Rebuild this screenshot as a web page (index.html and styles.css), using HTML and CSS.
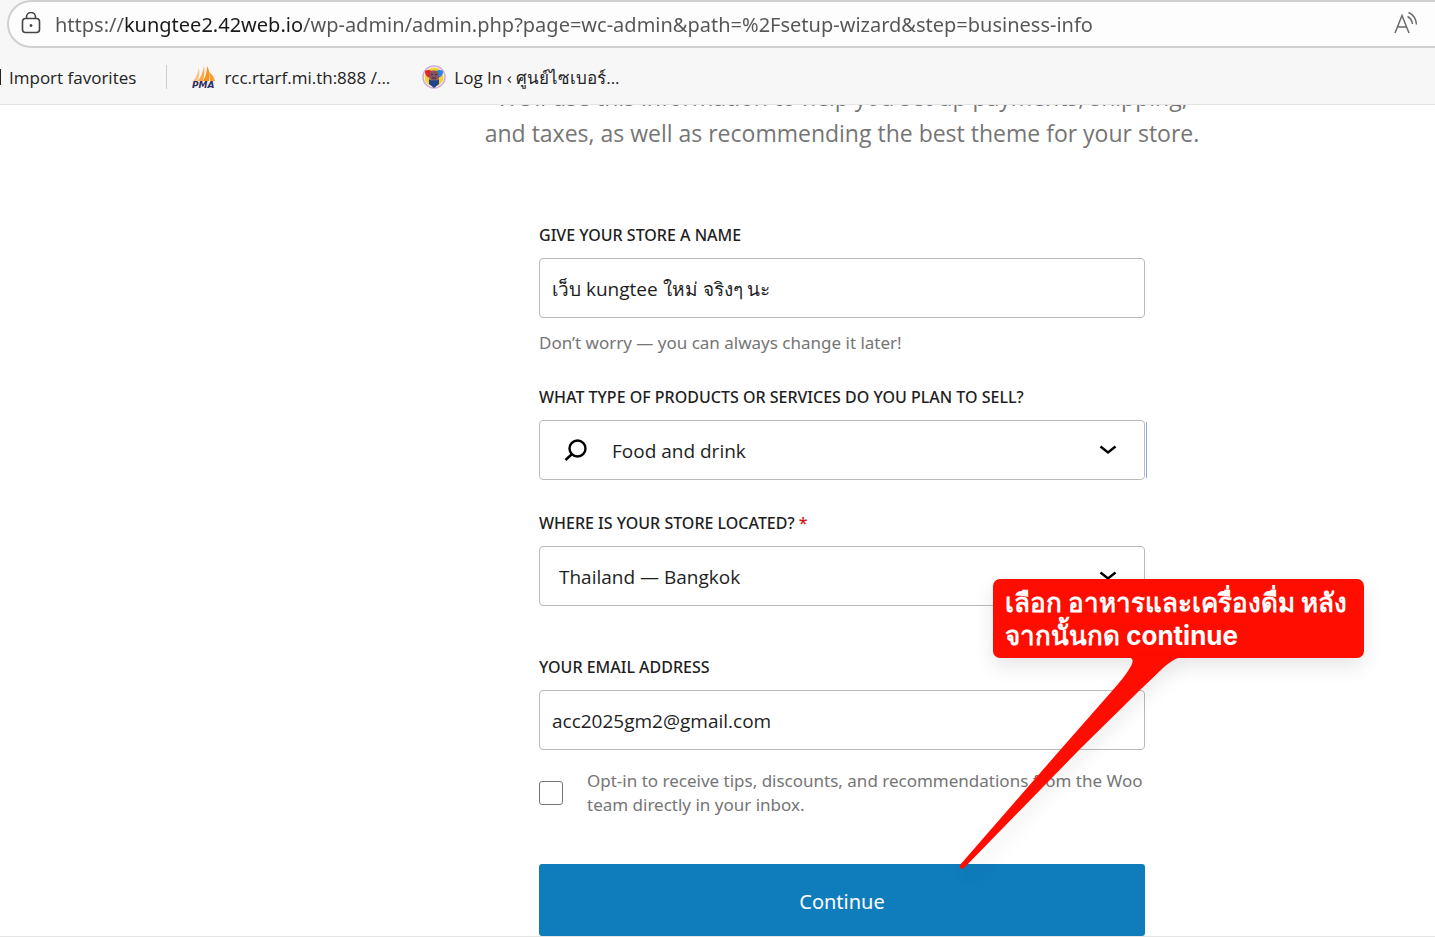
FILE: index.html
```
<!DOCTYPE html>
<html lang="en">
<head>
  <meta charset="UTF-8" />
  <title>Setup wizard</title>
  <link rel="stylesheet" href="styles.css">
</head>
<body>

<header class="browser">
  <div class="address-bar">
    <button class="icon-btn" type="button" aria-label="Site information">
      <svg width="20" height="22" viewBox="0 0 20 22" fill="none" stroke="#444" stroke-width="1.6">
        <rect x="1.5" y="6.5" width="17" height="14" rx="3"/>
        <path d="M5.5 6.5V5a4.2 4.2 0 0 1 9 0v1.5"/>
        <circle cx="10" cy="13.5" r="1" fill="#444" stroke-width="1"/>
      </svg>
    </button>
    <input class="url" type="text" aria-label="Address" value="https://kungtee2.42web.io/wp-admin/admin.php?page=wc-admin&amp;path=%2Fsetup-wizard&amp;step=business-info">
    <button class="icon-btn" type="button" aria-label="Read aloud">
      <svg width="24" height="24" viewBox="0 0 24 24" fill="none" stroke="#6b6b6b" stroke-width="1.5">
        <path d="M1 22 8 4.5 15 22M3.5 16h9"/>
        <path d="M13.5 5.5c3 1.5 4.5 4 5 7.5M14.5 1.5c4.5 2 7.5 6 8 12"/>
      </svg>
    </button>
  </div>
  <nav class="favorites">
    <a class="favorite import" href="#"><span class="import-edge"></span>Import favorites</a>
    <span class="divider"></span>
    <a class="favorite" href="#">
      <svg width="24" height="24" viewBox="0 0 24 24">
        <path d="M1.5 16C4 12 6 8 7 3c1 5 0 9-1 13z" fill="#fbc287"/>
        <path d="M6 16c3-4 5-9 6-15 1 5 0 11-1 15z" fill="#f9a84c"/>
        <path d="M11 16c3-5 4-10 4-15 3 5 3 10 2 15z" fill="#f7941d"/>
        <path d="M18 16c0-4 0-6-1-9 3 2 5 5 6 9z" fill="#f99b2e"/>
        <text class="pma" x="0" y="23">PMA</text>
      </svg>
      rcc.rtarf.mi.th:888 /...
    </a>
    <a class="favorite" href="#">
      <svg width="24" height="24" viewBox="0 0 24 24">
        <circle cx="12" cy="12" r="11" fill="#fff" stroke="#d3a9db" stroke-width="1.5"/>
        <circle cx="12" cy="12" r="9.5" fill="#f4cf35"/>
        <path d="M3 6c4-2 6-1 8 1L8 13c-3-1-5-3-5-7z" fill="#e2242c"/>
        <path d="M21 6c-4-2-6-1-8 1l3 6c3-1 5-3 5-7z" fill="#2584e0"/>
        <path d="M8 7c2-2 6-2 8 0l1 6-5 5-5-5z" fill="#85545c"/>
        <path d="M7 14c3 2 7 2 10 0v5l-5 4-5-4z" fill="#20468d"/>
        <path d="M9 9.5h2M13 9.5h2M10 13h4" stroke="#392b4d"/>
      </svg>
      Log In ‹ ศูนย์ไซเบอร์...
    </a>
  </nav>
</header>

<main class="wizard">
  <p class="intro">We’ll use this information to help you set up payments, shipping,<br>and taxes, as well as recommending the best theme for your store.</p>

  <form class="form">
    <div class="field">
      <label class="label" for="store-name">Give your store a name</label>
      <input class="control" id="store-name" type="text" value="เว็บ kungtee ใหม่ จริงๆ นะ">
      <p class="hint">Don’t worry — you can always change it later!</p>
    </div>

    <div class="field">
      <label class="label" for="industry">What type of products or services do you plan to sell?</label>
      <div class="select focus-edge">
        <svg class="search" width="24" height="24" viewBox="0 0 24 24" fill="none" stroke="#000" stroke-width="2.4">
          <circle cx="13.5" cy="10.5" r="8"/>
          <path d="m7.5 16.5-6 5.5"/>
        </svg>
        <select class="control with-search" id="industry"><option>Food and drink</option></select>
        <svg class="chevron" width="18" height="10" viewBox="0 0 18 10" fill="none" stroke="#000" stroke-width="2.4">
          <path d="m1.5 1.5 7.5 6 7.5-6"/>
        </svg>
      </div>
    </div>

    <div class="field location">
      <label class="label" for="location">Where is your store located? <span class="required">*</span></label>
      <div class="select">
        <select class="control" id="location"><option>Thailand — Bangkok</option></select>
        <svg class="chevron" width="18" height="10" viewBox="0 0 18 10" fill="none" stroke="#000" stroke-width="2.4">
          <path d="m1.5 1.5 7.5 6 7.5-6"/>
        </svg>
      </div>
    </div>

    <div class="field email">
      <label class="label" for="email">Your email address</label>
      <input class="control" id="email" type="email" value="acc2025gm2@gmail.com">
    </div>

    <div class="opt-in">
      <input class="checkbox" id="opt-in" type="checkbox">
      <label for="opt-in">Opt-in to receive tips, discounts, and recommendations from the Woo<br>team directly in your inbox.</label>
    </div>

    <button class="continue" type="button">Continue</button>

    <div class="callout">
      เลือก อาหารและเครื่องดื่ม หลัง<br>จากนั้นกด continue
      <svg class="callout-tail" width="230" height="214" viewBox="0 0 230 214">
        <path d="M168 0c6 1 7 3 4 9-5 9-11 16-19 25L102 92 1 208c-1 3 2 5 4 3L121 92l59-58 24-23c7-6 12-10 20-11z" fill="#ff0d00"/>
      </svg>
    </div>
  </form>
</main>

</body>
</html>
```
FILE: styles.css
```
* {
  box-sizing: border-box;
}

body {
  margin: 0;
  background: #fff;
  color: #1e1e1e;
  font-family: 'Noto Sans', 'Open Sans', sans-serif;
  font-size: 17px;
}

input, select, button {
  font-family: inherit;
}

/* browser chrome */
.browser {
  background: #f7f7f7;
  border-bottom: 1px solid #e5e5e5;
}

.address-bar {
  display: flex;
  align-items: center;
  gap: 14px;
  height: 48px;
  margin-left: 7px;
  padding: 0 17px 0 12px;
  background: #fdfdfd;
  border: 2px solid #d0d0d0;
  border-right: 0;
  border-radius: 24px 0 0 24px;
}

.icon-btn {
  display: flex;
  padding: 0 0 2px;
  border: 0;
  background: none;
}

/* the host is darker than the rest of the address */
.url {
  flex: 1;
  min-width: 0;
  padding: 0;
  border: 0;
  background: linear-gradient(90deg, #555 68px, #1a1a1a 68px, #1a1a1a 248px, #555 248px);
  background-clip: text;
  -webkit-text-fill-color: transparent;
  color: #555;
  font-size: 20px;
}

.favorites {
  display: flex;
  align-items: center;
  height: 56px;
  padding-top: 2px;
}

.favorite {
  display: flex;
  align-items: center;
  gap: 8px;
  margin-right: 32px;
  color: #222;
  font-family: 'Open Sans', 'Noto Sans', sans-serif;
  font-size: 17px;
  text-decoration: none;
  white-space: nowrap;
}

.import {
  margin-right: 30px;
}

.import-edge {
  width: 1px;
  height: 16px;
  background: #222;
}

.divider {
  width: 1px;
  height: 24px;
  margin-right: 25px;
  background: #ccc;
}

.pma {
  fill: #2f2f62;
  font: italic bold 9px 'DejaVu Sans', sans-serif;
}

/* setup wizard */
.wizard {
  padding-left: 249px;
  overflow: hidden;
  border-bottom: 1px solid #e5e5e5;
}

.intro {
  margin: -26px 0 72px;
  color: #757575;
  font-family: 'Open Sans', sans-serif;
  font-size: 23px;
  line-height: 36px;
  text-align: center;
}

.form {
  position: relative;
  display: flex;
  flex-direction: column;
  max-width: 606px;
  margin: 0 auto;
}

.field {
  display: flex;
  flex-direction: column;
  margin-bottom: 30px;
}

.location {
  margin-bottom: 48px;
}

.email {
  margin-bottom: 19px;
}

.label {
  margin-bottom: 11px;
  padding-top: 1px;
  font-size: 16px;
  font-weight: 500;
  line-height: 23px;
  text-transform: uppercase;
}

.field + .field {
  padding-top: 1px;
}

.required {
  color: #cc1818;
}

.control {
  width: 100%;
  height: 60px;
  padding: 1px 12px 0;
  border: 1px solid #bbb;
  border-radius: 4px;
  background: #fff;
  color: #1e1e1e;
  font-family: 'Open Sans', 'Noto Sans', sans-serif;
  font-size: 19px;
}

.hint {
  margin: 13px 0 0;
  color: #757575;
  line-height: 23px;
}

.select {
  position: relative;
}

.select .control {
  display: block;
  padding-left: 19px;
  appearance: none;
}

.select .with-search {
  padding-left: 72px;
}

.search {
  position: absolute;
  left: 25px;
  top: 18px;
}

.chevron {
  position: absolute;
  right: 28px;
  top: 25px;
}

.focus-edge::after {
  content: '';
  position: absolute;
  top: 2px;
  bottom: 2px;
  right: -2px;
  width: 1px;
  background: #8fa4e8;
}

.opt-in {
  display: flex;
  align-items: center;
  gap: 24px;
  margin-bottom: 47px;
  color: #757575;
  line-height: 24px;
  white-space: nowrap;
}

.checkbox {
  flex: none;
  width: 24px;
  height: 24px;
  margin: 0;
  border: 1px solid #757575;
  border-radius: 3px;
  background: #fff;
  appearance: none;
}

.continue {
  height: 72px;
  padding: 2px 0 0;
  border: 0;
  border-radius: 3px;
  background: #0f7cbb;
  color: #fff;
  font-size: 20px;
}

/* note pinned over the form */
.callout {
  position: absolute;
  left: 454px;
  top: 356px;
  width: 371px;
  padding: 7px 12px 6px;
  border-radius: 7px;
  background: #ff0d00;
  box-shadow: 0 8px 20px rgba(0, 0, 0, 0.1);
  color: #fff;
  font-family: Inter, 'Noto Sans', sans-serif;
  font-size: 26px;
  font-weight: 700;
  line-height: 33px;
  white-space: nowrap;
}

.callout-tail {
  position: absolute;
  left: -34px;
  top: 78px;
  filter: drop-shadow(6px 8px 8px rgba(0, 0, 0, 0.06));
}
```
